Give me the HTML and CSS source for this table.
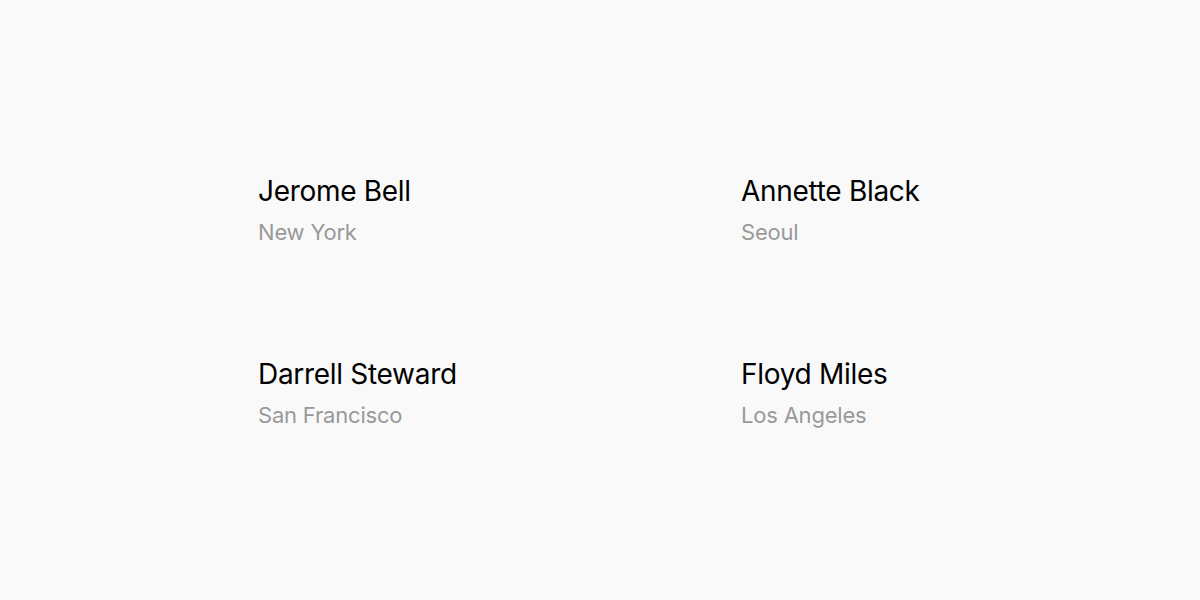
FILE: index.html
```html
<!DOCTYPE html>
<html>
<head>
<meta charset="utf-8">
<link rel="stylesheet" href="styles.css">
</head>
<body>
<main class="page">
  <div class="grid">
    <div class="person">
      <div class="name">Jerome Bell</div>
      <div class="city">New York</div>
    </div>
    <div class="person">
      <div class="name">Annette Black</div>
      <div class="city">Seoul</div>
    </div>
    <div class="person">
      <div class="name">Darrell Steward</div>
      <div class="city">San Francisco</div>
    </div>
    <div class="person">
      <div class="name">Floyd Miles</div>
      <div class="city">Los Angeles</div>
    </div>
  </div>
</main>
</body>
</html>
```
FILE: styles.css
```css
html, body {
  margin: 0;
  padding: 0;
  background: #f9f9f9;
}
.page {
  height: 600px;
  display: flex;
  align-items: center;
  padding-left: 258px;
  padding-top: 3px;
  box-sizing: border-box;
  font-family: Inter, "Noto Sans", sans-serif;
}
.grid {
  display: grid;
  grid-template-columns: 483px 483px;
  row-gap: 110px;
}
.person {
  display: flex;
  flex-direction: column;
}
.name {
  font-size: 28px;
  line-height: 34px;
  color: #000;
  letter-spacing: -0.3px;
}
.city {
  font-size: 22px;
  line-height: 30px;
  margin-top: 9px;
  color: #999;
  letter-spacing: -0.2px;
}
```
